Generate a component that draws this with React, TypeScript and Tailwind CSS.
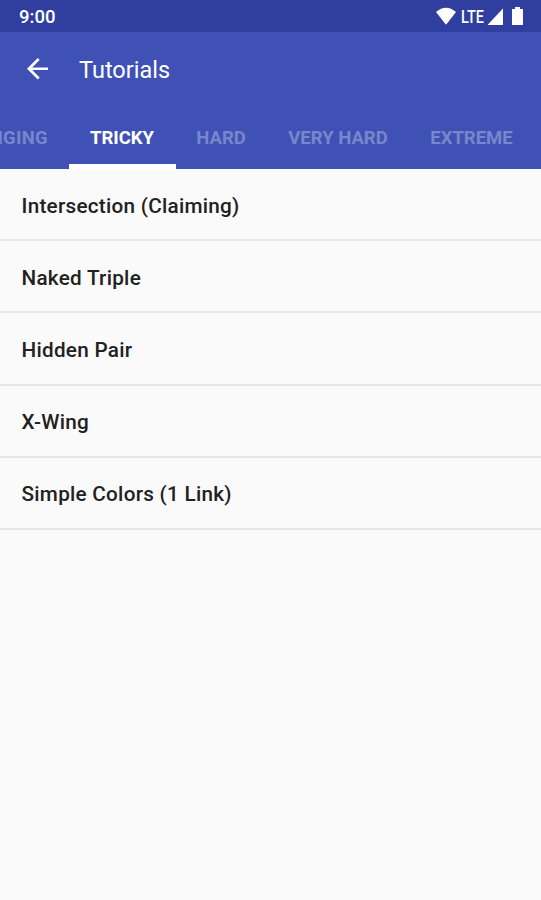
const tutorials = [
  'Intersection (Claiming)',
  'Naked Triple',
  'Hidden Pair',
  'X-Wing',
  'Simple Colors (1 Link)',
];

export default function App() {
  return (
    <div className="flex h-[900px] w-[541px] flex-col overflow-hidden bg-[#fafafa] font-['Roboto',sans-serif]">
      <div className="flex h-8 shrink-0 items-center bg-[#303f9f] pl-[19px] text-white">
        <span className="pt-[2px] text-[18.5px] font-medium leading-8">9:00</span>
        <svg className="ml-auto shrink-0" width="105" height="32" viewBox="436 0 105 32" fill="#fff">
          <path d="M436 12Q446 3.5 456 12L446 24.7Z" />
          <text x="461" y="22.7" fontSize="17.5" fontWeight="500" textLength="23" lengthAdjust="spacingAndGlyphs">LTE</text>
          <path d="M487.5 25L503 8.5V25Z" />
          <path d="M512 9.5q0-.5.5-.5H515V7h5v2h2.500q.5 0 .5.500V24.500q0 .5-.5.500h-10q-.5 0-.5-.500Z" />
        </svg>
      </div>
      <header className="h-[137px] shrink-0 bg-[#3f51b5] text-white">
        <div className="flex h-[76px] items-center pl-[26.5px]">
          <svg className="mb-[2px]" width="21.5" height="21.5" viewBox="4 4 16 16" fill="#fff"><path d="M20 11H7.830l5.590-5.590L12 4l-8 8 8 8 1.410-1.410L7.830 13H20v-2z" /></svg>
          <h1 className="ml-[31px] text-[23.5px] leading-8">Tutorials</h1>
        </div>
        <nav className="flex h-[61px] text-[18.5px] font-bold text-[#7986cb]">
          <div className="flex h-full w-[69px] shrink-0 items-center justify-end pr-[21px] pt-px tracking-[0.3px]">CHANGING</div>
          <div className="flex h-full w-[107px] shrink-0 items-center justify-center border-b-[5px] border-white pr-px pt-[6px] text-white">TRICKY</div>
          <div className="flex h-full w-[91px] shrink-0 items-center justify-center pr-px pt-px">HARD</div>
          <div className="flex h-full w-[142px] shrink-0 items-center justify-center pt-px">VERY HARD</div>
          <div className="flex h-full w-[125px] shrink-0 items-center justify-center pt-px">EXTREME</div>
        </nav>
      </header>
      <main>
        {tutorials.map((name) => (
          <div key={name} className="flex h-[72.2px] items-center border-b-2 border-[#e6e6e6] pl-[21.5px] pt-[4px] text-[20.7px] font-medium tracking-[0.27px] text-[#212121]">{name}</div>
        ))}
      </main>
    </div>
  );
}
